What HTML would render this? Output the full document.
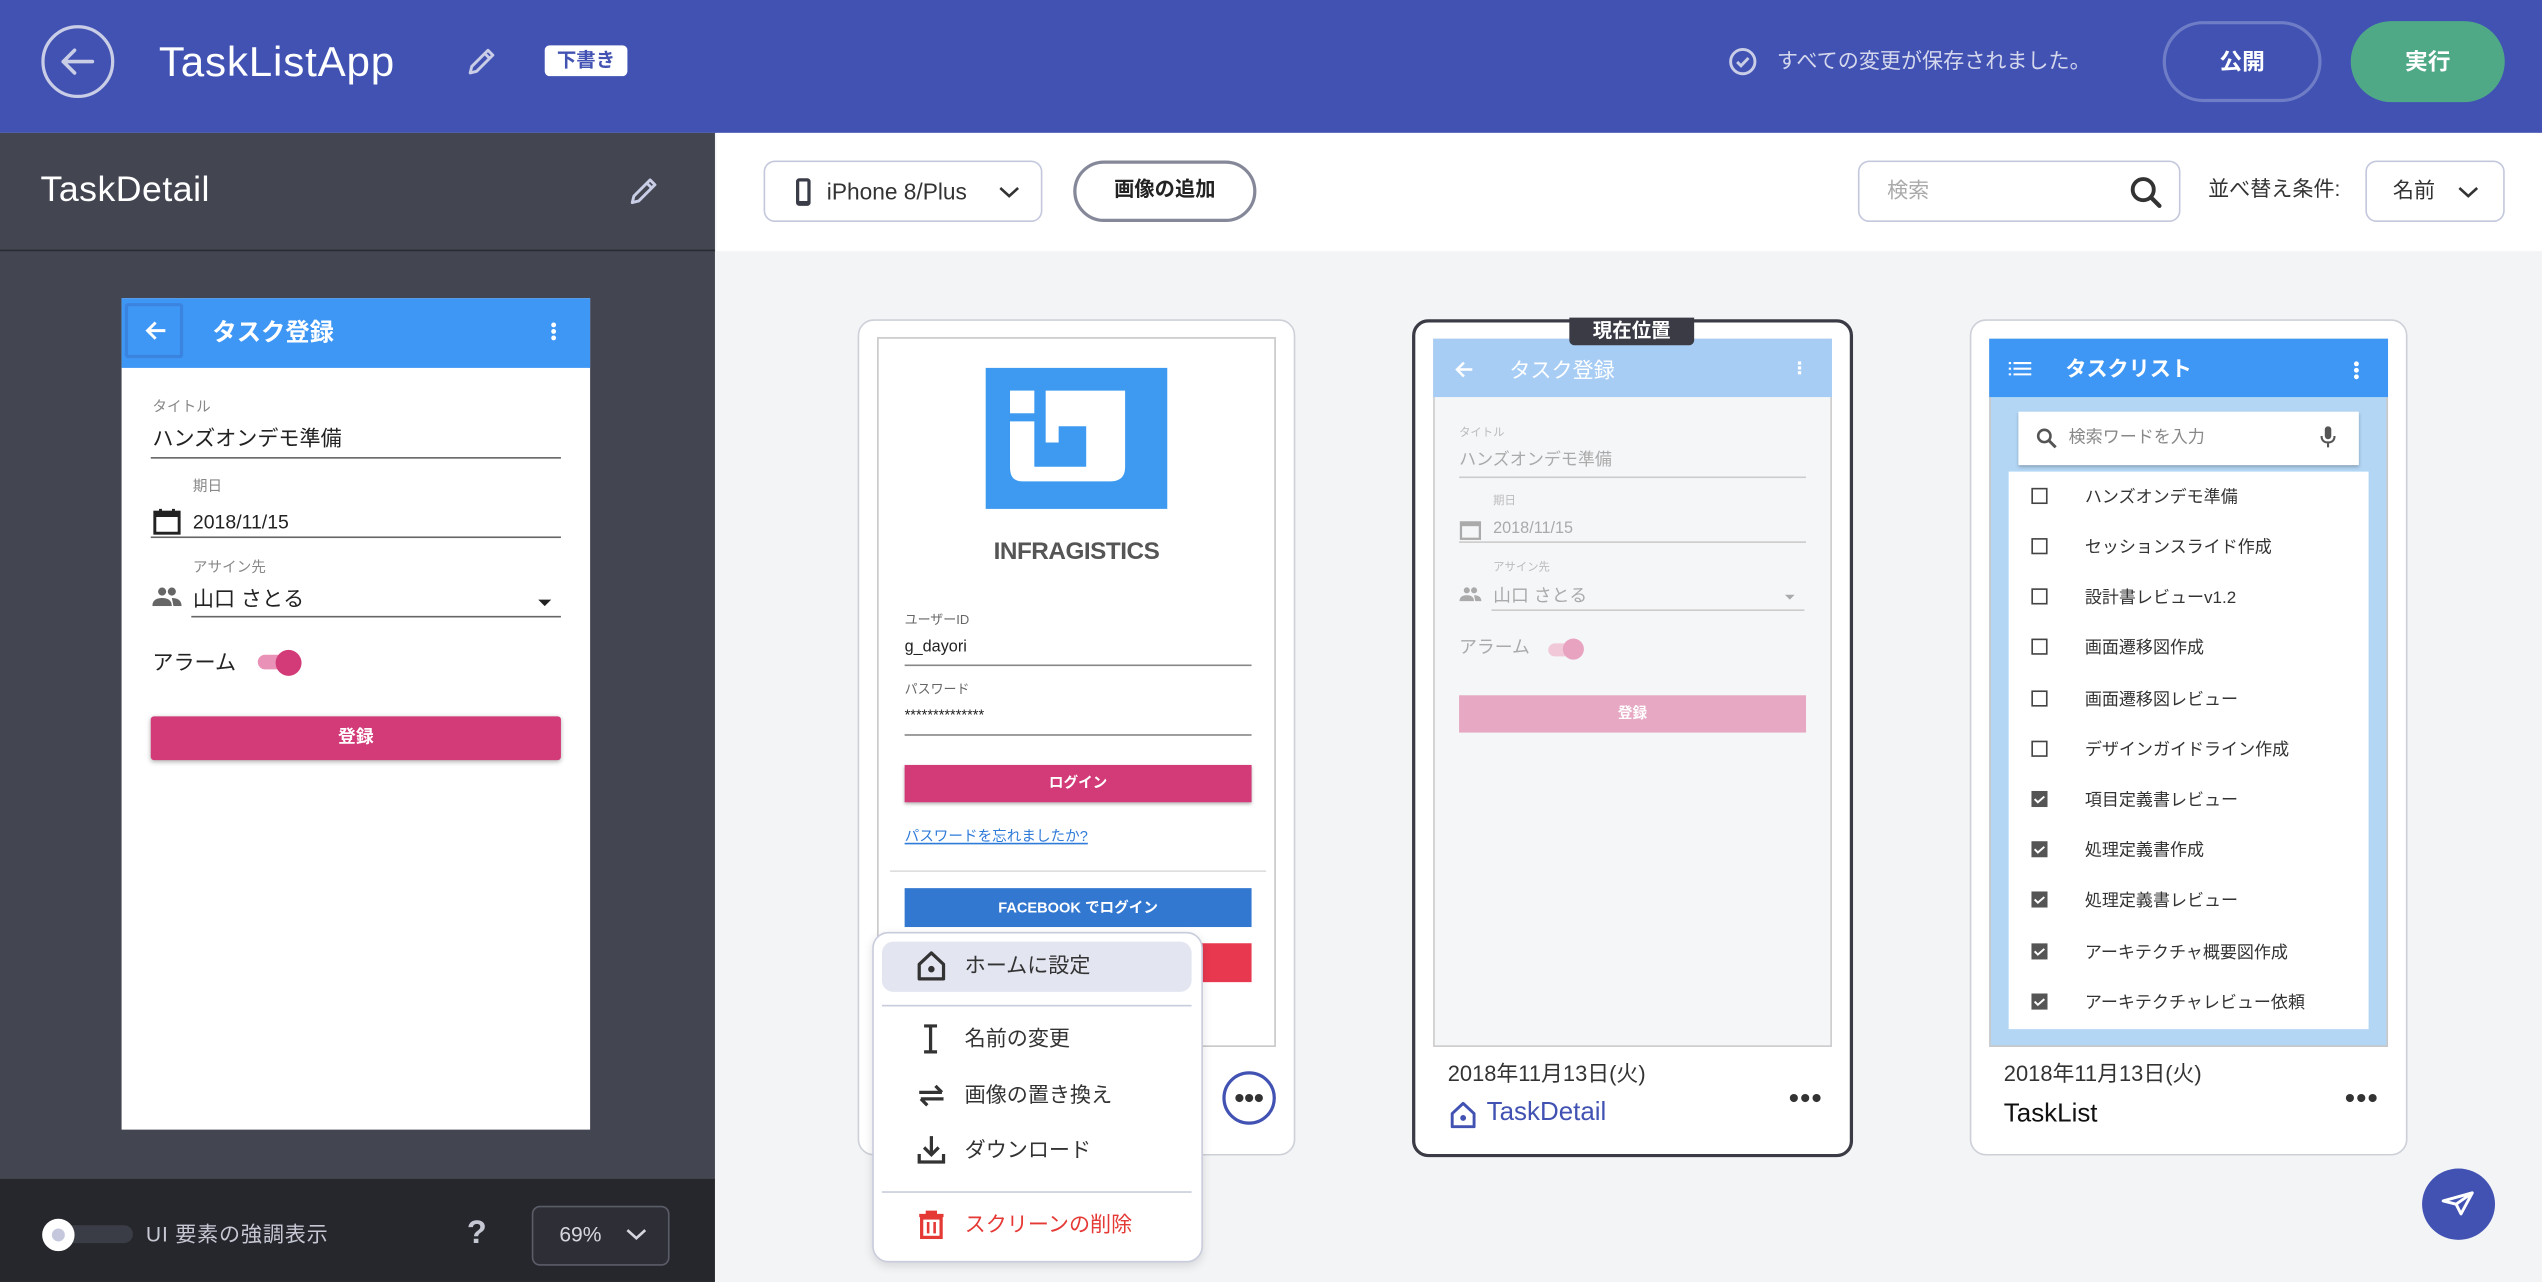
<!DOCTYPE html>
<html><head><meta charset="utf-8"><style>
*{box-sizing:border-box;margin:0;padding:0}
html,body{width:2542px;height:1282px;overflow:hidden;background:#f3f4f6}
body{font-family:"Liberation Sans","Noto Sans CJK JP",sans-serif}
#w{position:absolute;left:0;top:0;width:1568px;height:791px;transform:scale(1.6212,1.6207);transform-origin:0 0;background:#f3f4f6}
.a{position:absolute}
.t{position:absolute;white-space:nowrap;line-height:1}
</style></head><body><div id="w">
<!-- header -->
<div class="a" style="left:0;top:0;width:1568px;height:82px;background:#4152b3"></div>
<svg class="a" style="left:25px;top:15px" width="46" height="46" viewBox="0 0 46 46"><circle cx="23" cy="23" r="21.5" fill="none" stroke="#c9cde6" stroke-width="2"/><path d="M32 23H14M21 16l-7 7 7 7" fill="none" stroke="#c9cde6" stroke-width="2.2" stroke-linecap="round" stroke-linejoin="round"/></svg>
<div class="t" style="left:98px;top:25px;font-size:26px;color:#fff;letter-spacing:.5px">TaskListApp</div>
<svg class="a" style="left:287px;top:28px" width="20" height="20" viewBox="0 0 20 20"><path d="M3 17l1-4L14 3l3 3L7 16z M12 5l3 3" fill="none" stroke="#c9cde6" stroke-width="1.8" stroke-linejoin="round"/></svg>
<div class="a" style="left:336px;top:28px;width:51px;height:19px;background:#fff;border-radius:3px;color:#4152b3;font-size:12px;font-weight:bold;text-align:center;line-height:19px">下書き</div>
<svg class="a" style="left:1066px;top:29px" width="18" height="18" viewBox="0 0 18 18"><circle cx="9" cy="9" r="7.5" fill="none" stroke="#c9cde6" stroke-width="1.8"/><path d="M5.5 9.2l2.4 2.4 4.6-4.8" fill="none" stroke="#c9cde6" stroke-width="1.8"/></svg>
<div class="t" style="left:1096px;top:31px;font-size:13px;color:#d5d8ec">すべての変更が保存されました。</div>
<div class="a" style="left:1334px;top:13px;width:98px;height:50px;border:2px solid #6f7dc7;border-radius:25px;color:#fff;font-size:14px;font-weight:bold;text-align:center;line-height:46px">公開</div>
<div class="a" style="left:1450px;top:13px;width:95px;height:50px;background:#4fa987;border-radius:25px;color:#fff;font-size:14px;font-weight:bold;text-align:center;line-height:50px">実行</div>

<!-- left panel -->
<div class="a" style="left:0;top:82px;width:441px;height:645px;background:#434551"></div>
<div class="a" style="left:0;top:154px;width:441px;height:1px;background:#2a2b31"></div>
<div class="t" style="left:25px;top:106px;font-size:22px;color:#fff;letter-spacing:.3px">TaskDetail</div>
<svg class="a" style="left:387px;top:108px" width="20" height="20" viewBox="0 0 20 20"><path d="M3 17l1-4L14 3l3 3L7 16z M12 5l3 3" fill="none" stroke="#c9cde6" stroke-width="1.8" stroke-linejoin="round"/></svg>
<div class="a" style="left:75px;top:184px;width:289px;height:513px;background:#fff"></div>
<div class="a" style="left:75px;top:184px;width:289px;height:43px;background:#3f97f5"></div>
<div class="a" style="left:77px;top:187px;width:36px;height:34px;border:2px solid #3a84e0;border-radius:2px"></div>
<svg class="a" style="left:88px;top:197px" width="16" height="14" viewBox="0 0 16 14"><path d="M14 7H3M8 2L3 7l5 5" fill="none" stroke="#fff" stroke-width="1.8"/></svg>
<div class="t" style="left:131px;top:198px;font-size:15px;color:#fff;font-weight:bold">タスク登録</div>
<div class="a" style="left:340px;top:199px;width:3px;height:3px;background:#fff;border-radius:50%;box-shadow:0 4px 0 #fff,0 8px 0 #fff"></div>
<div class="t" style="left:94px;top:247px;font-size:9px;color:#888">タイトル</div>
<div class="t" style="left:94px;top:264px;font-size:13px;color:#222">ハンズオンデモ準備</div>
<div class="a" style="left:93px;top:282px;width:253px;height:1px;background:#666"></div>
<div class="t" style="left:119px;top:296px;font-size:9px;color:#888">期日</div>
<svg class="a" style="left:94px;top:313px" width="18" height="18" viewBox="0 0 18 18"><rect x="1.5" y="3" width="15" height="13" fill="none" stroke="#222" stroke-width="1.8"/><rect x="1.5" y="3" width="15" height="3" fill="#222"/><path d="M5 1v3M13 1v3" stroke="#222" stroke-width="1.8"/></svg>
<div class="t" style="left:119px;top:316px;font-size:12px;color:#222">2018/11/15</div>
<div class="a" style="left:93px;top:331px;width:253px;height:1px;background:#666"></div>
<div class="t" style="left:119px;top:346px;font-size:9px;color:#888">アサイン先</div>
<svg class="a" style="left:94px;top:362px" width="18" height="12" viewBox="0 0 18 12"><circle cx="6" cy="3" r="2.5" fill="#666"/><circle cx="12" cy="3" r="2.5" fill="#666"/><path d="M0 12c0-4 3-5 6-5s6 1 6 5zM12 7c3 0 6 1 6 5h-5z" fill="#666"/></svg>
<div class="t" style="left:119px;top:363px;font-size:13px;color:#222">山口 さとる</div>
<div class="a" style="left:332px;top:370px;border:4px solid transparent;border-top:4px solid #222"></div>
<div class="a" style="left:118px;top:380px;width:228px;height:1px;background:#666"></div>
<div class="t" style="left:94px;top:402px;font-size:13px;color:#222">アラーム</div>
<div class="a" style="left:159px;top:404px;width:24px;height:9px;background:#e991b6;border-radius:5px"></div>
<div class="a" style="left:170px;top:401px;width:16px;height:16px;background:#d23a78;border-radius:50%"></div>
<div class="a" style="left:93px;top:442px;width:253px;height:27px;background:#d23a78;border-radius:2px;box-shadow:0 1px 3px rgba(0,0,0,.3);color:#fff;font-size:11px;font-weight:bold;text-align:center;line-height:27px">登録</div>
<!-- left bottom bar -->
<div class="a" style="left:0;top:727px;width:441px;height:64px;background:#26272d"></div>
<div class="a" style="left:30px;top:756px;width:52px;height:11px;background:#3b3d46;border-radius:6px"></div>
<div class="a" style="left:26px;top:752px;width:20px;height:20px;background:#fff;border-radius:50%"></div>
<div class="a" style="left:32px;top:758px;width:8px;height:8px;background:#c5c8dc;border-radius:50%"></div>
<div class="t" style="left:90px;top:755px;font-size:13px;color:#c5c7d3;letter-spacing:.5px">UI 要素の強調表示</div>
<div class="t" style="left:288px;top:751px;font-size:20px;color:#c5c7d3;font-weight:bold">?</div>
<div class="a" style="left:328px;top:744px;width:85px;height:37px;border:1px solid #5a5c68;border-radius:5px;background:#2e2f36"></div>
<div class="t" style="left:345px;top:755px;font-size:13px;color:#d5d7e0">69%</div>
<svg class="a" style="left:386px;top:757px" width="13" height="9" viewBox="0 0 13 9"><path d="M1 2l5.5 5 5.5-5" fill="none" stroke="#d5d7e0" stroke-width="1.6"/></svg>

<!-- toolbar -->
<div class="a" style="left:442px;top:82px;width:1126px;height:73px;background:#fff"></div>
<div class="a" style="left:471px;top:99px;width:172px;height:38px;border:1px solid #c4c8dd;border-radius:7px"></div>
<div class="a" style="left:491px;top:110px;width:9px;height:17px;background:#3a3c48;border-radius:2px"></div>
<div class="a" style="left:493px;top:112px;width:5px;height:12px;background:#fff"></div>
<div class="t" style="left:510px;top:111px;font-size:14px;color:#333">iPhone 8/Plus</div>
<svg class="a" style="left:616px;top:114px" width="13" height="9" viewBox="0 0 13 9"><path d="M1 2l5.5 5 5.5-5" fill="none" stroke="#333" stroke-width="1.6"/></svg>
<div class="a" style="left:662px;top:99px;width:113px;height:38px;border:2.5px solid #858899;border-radius:19px;font-size:12.5px;font-weight:bold;color:#222;text-align:center;line-height:33px">画像の追加</div>
<div class="a" style="left:1146px;top:99px;width:199px;height:38px;border:1px solid #c4c8dd;border-radius:7px"></div>
<div class="t" style="left:1164px;top:111px;font-size:13px;color:#aaa">検索</div>
<svg class="a" style="left:1313px;top:108px" width="22" height="22" viewBox="0 0 22 22"><circle cx="9" cy="9" r="6.5" fill="none" stroke="#333" stroke-width="2.4"/><path d="M14 14l5 5" stroke="#333" stroke-width="2.6" stroke-linecap="round"/></svg>
<div class="t" style="left:1362px;top:110px;font-size:13px;color:#333">並べ替え条件:</div>
<div class="a" style="left:1459px;top:99px;width:86px;height:38px;border:1px solid #c4c8dd;border-radius:7px"></div>
<div class="t" style="left:1476px;top:111px;font-size:13px;color:#333">名前</div>
<svg class="a" style="left:1516px;top:114px" width="13" height="9" viewBox="0 0 13 9"><path d="M1 2l5.5 5 5.5-5" fill="none" stroke="#333" stroke-width="1.6"/></svg>

<!-- card 1 -->
<div class="a" style="left:529px;top:197px;width:270px;height:516px;background:#fff;border:1.5px solid #cdd0d8;border-radius:10px"></div>
<div class="a" style="left:541px;top:208px;width:246px;height:438px;background:#fff;border:1px solid #c8c8c8"></div>
<div class="a" style="left:608px;top:227px;width:112px;height:87px;background:#3d9af0"></div>
<svg class="a" style="left:608px;top:227px" width="112" height="87" viewBox="0 0 112 87"><rect x="15" y="14" width="15" height="14" fill="#fff"/><path d="M15 33h15v28h32V36H45v10H37V14h49v47c0 6-3 9-9 9H23c-6 0-8-3-8-9z" fill="#fff"/></svg>
<div class="t" style="left:608px;top:333px;width:112px;text-align:center;font-size:15px;color:#555;font-weight:bold;letter-spacing:-.3px">INFRAGISTICS</div>
<div class="t" style="left:558px;top:379px;font-size:8px;color:#666">ユーザーID</div>
<div class="t" style="left:558px;top:395px;font-size:10px;color:#222">g_dayori</div>
<div class="a" style="left:558px;top:410px;width:214px;height:1px;background:#888"></div>
<div class="t" style="left:558px;top:422px;font-size:8px;color:#666">パスワード</div>
<div class="t" style="left:558px;top:437px;font-size:9px;color:#222">**************</div>
<div class="a" style="left:558px;top:453px;width:214px;height:1px;background:#888"></div>
<div class="a" style="left:558px;top:472px;width:214px;height:23px;background:#d23a78;box-shadow:0 1px 2px rgba(0,0,0,.3);color:#fff;font-size:9px;font-weight:bold;text-align:center;line-height:23px">ログイン</div>
<div class="t" style="left:558px;top:512px;font-size:9px;color:#2f7bd8;text-decoration:underline">パスワードを忘れましたか?</div>
<div class="a" style="left:549px;top:537px;width:232px;height:1px;background:#ddd"></div>
<div class="a" style="left:558px;top:548px;width:214px;height:24px;background:#3277d0;color:#fff;font-size:9px;font-weight:bold;text-align:center;line-height:24px">FACEBOOK でログイン</div>
<div class="a" style="left:558px;top:582px;width:214px;height:24px;background:#e8384f"></div>
<div class="a" style="left:754px;top:661px;width:33px;height:33px;border:2px solid #4152b3;border-radius:50%;background:#fff"></div>
<div class="a" style="left:762px;top:675px;width:5px;height:5px;background:#333;border-radius:50%;box-shadow:6px 0 0 #333,12px 0 0 #333"></div>

<!-- menu -->
<div class="a" style="left:538px;top:575px;width:204px;height:204px;background:#fff;border:1px solid #c9ccdc;border-radius:10px;box-shadow:0 2px 6px rgba(0,0,0,.12)"></div>
<div class="a" style="left:544px;top:581px;width:191px;height:31px;background:#e3e5f1;border-radius:7px"></div>
<svg class="a" style="left:565px;top:586px" width="19" height="20" viewBox="0 0 19 20"><path d="M2 9L9.5 2 17 9v9H2z" fill="none" stroke="#333" stroke-width="2" stroke-linejoin="round"/><circle cx="9.5" cy="12" r="2" fill="#333"/></svg>
<div class="t" style="left:595px;top:589px;font-size:13px;color:#333">ホームに設定</div>
<div class="a" style="left:544px;top:620px;width:191px;height:1px;background:#c9ccdc"></div>
<svg class="a" style="left:567px;top:632px" width="14" height="18" viewBox="0 0 14 18"><path d="M3 1h8M3 17h8M7 1v16" stroke="#333" stroke-width="2"/></svg>
<div class="t" style="left:595px;top:634px;font-size:13px;color:#333">名前の変更</div>
<svg class="a" style="left:565px;top:667px" width="19" height="18" viewBox="0 0 19 18"><path d="M2 7h14M12 3l4 4M17 11H3M7 15l-4-4" fill="none" stroke="#333" stroke-width="2"/></svg>
<div class="t" style="left:595px;top:669px;font-size:13px;color:#333">画像の置き換え</div>
<svg class="a" style="left:565px;top:700px" width="19" height="19" viewBox="0 0 19 19"><path d="M9.5 1v11M5 8l4.5 4.5L14 8M2 12v5h15v-5" fill="none" stroke="#333" stroke-width="2"/></svg>
<div class="t" style="left:595px;top:703px;font-size:13px;color:#333">ダウンロード</div>
<div class="a" style="left:544px;top:735px;width:191px;height:1px;background:#c9ccdc"></div>
<svg class="a" style="left:566px;top:746px" width="17" height="19" viewBox="0 0 17 19"><path d="M1 4h15M6 4V2h5v2" fill="none" stroke="#e53935" stroke-width="2"/><rect x="2.5" y="5.5" width="12" height="12" fill="none" stroke="#e53935" stroke-width="2"/><path d="M6.5 8v7M10.5 8v7" stroke="#e53935" stroke-width="1.6"/></svg>
<div class="t" style="left:595px;top:749px;font-size:13px;color:#e53935">スクリーンの削除</div>

<!-- card 2 -->
<div class="a" style="left:871px;top:197px;width:272px;height:517px;background:#fff;border:2.5px solid #3a3b45;border-radius:10px"></div>
<div class="a" style="left:884px;top:209px;width:246px;height:437px;background:#f5f6f8;border:1px solid #ccc"></div>
<div class="a" style="left:884px;top:209px;width:246px;height:36px;background:#a8cdf5"></div>
<div class="a" style="left:968px;top:196px;width:77px;height:17px;background:#3a3b45;border-radius:0 0 3px 3px;color:#fff;font-size:12px;font-weight:bold;text-align:center;line-height:16px">現在位置</div>
<svg class="a" style="left:896px;top:222px" width="14" height="12" viewBox="0 0 16 14"><path d="M14 7H3M8 2L3 7l5 5" fill="none" stroke="#fff" stroke-width="1.8"/></svg>
<div class="t" style="left:931px;top:222px;font-size:13px;color:#fff">タスク登録</div>
<div class="a" style="left:1109px;top:223px;width:2px;height:2px;background:#fff;box-shadow:0 3px 0 #fff,0 6px 0 #fff"></div>
<div class="t" style="left:900px;top:264px;font-size:7px;color:#bbb">タイトル</div>
<div class="t" style="left:900px;top:279px;font-size:10.5px;color:#aaa">ハンズオンデモ準備</div>
<div class="a" style="left:900px;top:294px;width:214px;height:1px;background:#ccc"></div>
<div class="t" style="left:921px;top:306px;font-size:7px;color:#bbb">期日</div>
<svg class="a" style="left:900px;top:320px" width="14" height="14" viewBox="0 0 18 18"><rect x="1.5" y="3" width="15" height="13" fill="none" stroke="#aaa" stroke-width="1.8"/><rect x="1.5" y="3" width="15" height="3" fill="#aaa"/></svg>
<div class="t" style="left:921px;top:322px;font-size:10px;color:#aaa">2018/11/15</div>
<div class="a" style="left:900px;top:334px;width:214px;height:1px;background:#ccc"></div>
<div class="t" style="left:921px;top:347px;font-size:7px;color:#bbb">アサイン先</div>
<svg class="a" style="left:900px;top:362px" width="14" height="9" viewBox="0 0 18 12"><circle cx="6" cy="3" r="2.5" fill="#aaa"/><circle cx="12" cy="3" r="2.5" fill="#aaa"/><path d="M0 12c0-4 3-5 6-5s6 1 6 5zM12 7c3 0 6 1 6 5h-5z" fill="#aaa"/></svg>
<div class="t" style="left:921px;top:363px;font-size:11px;color:#aaa">山口 さとる</div>
<div class="a" style="left:1101px;top:367px;border:3.5px solid transparent;border-top:3.5px solid #aaa"></div>
<div class="a" style="left:920px;top:376px;width:193px;height:1px;background:#ccc"></div>
<div class="t" style="left:900px;top:395px;font-size:11px;color:#aaa">アラーム</div>
<div class="a" style="left:955px;top:397px;width:18px;height:8px;background:#f0c8d8;border-radius:4px"></div>
<div class="a" style="left:964px;top:394px;width:13px;height:13px;background:#e8a3c0;border-radius:50%"></div>
<div class="a" style="left:900px;top:429px;width:214px;height:23px;background:#e6a8c2;color:#fff;font-size:9px;font-weight:bold;text-align:center;line-height:23px">登録</div>
<div class="t" style="left:893px;top:656px;font-size:13.5px;color:#333">2018年11月13日(火)</div>
<svg class="a" style="left:893px;top:679px" width="19" height="18" viewBox="0 0 19 20"><path d="M2 9L9.5 2 17 9v9H2z" fill="none" stroke="#4152b3" stroke-width="2" stroke-linejoin="round"/><circle cx="9.5" cy="12" r="2" fill="#4152b3"/></svg>
<div class="t" style="left:917px;top:679px;font-size:16px;color:#4152b3">TaskDetail</div>
<div class="a" style="left:1104px;top:675px;width:5px;height:5px;background:#333;border-radius:50%;box-shadow:7px 0 0 #333,14px 0 0 #333"></div>

<!-- card 3 -->
<div class="a" style="left:1215px;top:197px;width:270px;height:516px;background:#fff;border:1.5px solid #cdd0d8;border-radius:10px"></div>
<div class="a" style="left:1227px;top:209px;width:246px;height:437px;background:#b3d6f5;border:1px solid #c8c8c8"></div>
<div class="a" style="left:1227px;top:209px;width:246px;height:36px;background:#3f97f5"></div>
<svg class="a" style="left:1239px;top:223px" width="14" height="9" viewBox="0 0 14 9"><path d="M3 1h11M3 4.5h11M3 8h11" stroke="#fff" stroke-width="1.3"/><path d="M0 1h1.5M0 4.5h1.5M0 8h1.5" stroke="#fff" stroke-width="1.3"/></svg>
<div class="t" style="left:1274px;top:221px;font-size:13px;color:#fff;font-weight:bold">タスクリスト</div>
<div class="a" style="left:1452px;top:223px;width:3px;height:3px;background:#fff;border-radius:50%;box-shadow:0 4px 0 #fff,0 8px 0 #fff"></div>
<div class="a" style="left:1245px;top:254px;width:210px;height:33px;background:#fff;box-shadow:0 1px 2px rgba(0,0,0,.25)"></div>
<svg class="a" style="left:1256px;top:264px" width="13" height="13" viewBox="0 0 13 13"><circle cx="5" cy="5" r="3.8" fill="none" stroke="#555" stroke-width="1.6"/><path d="M8 8l4 4" stroke="#555" stroke-width="1.8"/></svg>
<div class="t" style="left:1276px;top:265px;font-size:10.5px;color:#888">検索ワードを入力</div>
<svg class="a" style="left:1431px;top:263px" width="10" height="14" viewBox="0 0 10 14"><rect x="3" y="0" width="4" height="8" rx="2" fill="#555"/><path d="M1 6c0 3 2 4 4 4s4-1 4-4M5 10v3" fill="none" stroke="#555" stroke-width="1.3"/></svg>
<div class="a" style="left:1239px;top:291px;width:222px;height:344px;background:#fff"></div>
<div class="t" style="left:1236px;top:656px;font-size:13.5px;color:#333">2018年11月13日(火)</div>
<div class="t" style="left:1236px;top:680px;font-size:16px;color:#111">TaskList</div>
<div class="a" style="left:1447px;top:675px;width:5px;height:5px;background:#333;border-radius:50%;box-shadow:7px 0 0 #333,14px 0 0 #333"></div>

<!-- FAB -->
<div class="a" style="left:1494px;top:721px;width:45px;height:44px;background:#4152b3;border-radius:50%"></div>
<svg class="a" style="left:1506px;top:734px" width="20" height="17" viewBox="0 0 20 17"><path d="M1 7l18-5-7 13-3-6z M9 9l10-7" fill="none" stroke="#fff" stroke-width="1.8" stroke-linejoin="round"/></svg>

<!-- task list items -->
<div class="t" style="left:1286px;top:302px;font-size:10.5px;color:#333">ハンズオンデモ準備</div>
<div class="t" style="left:1286px;top:333px;font-size:10.5px;color:#333">セッションスライド作成</div>
<div class="t" style="left:1286px;top:364px;font-size:10.5px;color:#333">設計書レビューv1.2</div>
<div class="t" style="left:1286px;top:395px;font-size:10.5px;color:#333">画面遷移図作成</div>
<div class="t" style="left:1286px;top:427px;font-size:10.5px;color:#333">画面遷移図レビュー</div>
<div class="t" style="left:1286px;top:458px;font-size:10.5px;color:#333">デザインガイドライン作成</div>
<div class="t" style="left:1286px;top:489px;font-size:10.5px;color:#333">項目定義書レビュー</div>
<div class="t" style="left:1286px;top:520px;font-size:10.5px;color:#333">処理定義書作成</div>
<div class="t" style="left:1286px;top:551px;font-size:10.5px;color:#333">処理定義書レビュー</div>
<div class="t" style="left:1286px;top:583px;font-size:10.5px;color:#333">アーキテクチャ概要図作成</div>
<div class="t" style="left:1286px;top:614px;font-size:10.5px;color:#333">アーキテクチャレビュー依頼</div>
<div class="a" style="left:1253px;top:301px;width:10px;height:10px;border:1.5px solid #444"></div>
<div class="a" style="left:1253px;top:332px;width:10px;height:10px;border:1.5px solid #444"></div>
<div class="a" style="left:1253px;top:363px;width:10px;height:10px;border:1.5px solid #444"></div>
<div class="a" style="left:1253px;top:394px;width:10px;height:10px;border:1.5px solid #444"></div>
<div class="a" style="left:1253px;top:426px;width:10px;height:10px;border:1.5px solid #444"></div>
<div class="a" style="left:1253px;top:457px;width:10px;height:10px;border:1.5px solid #444"></div>
<svg class="a" style="left:1253px;top:488px" width="10" height="10"><rect width="10" height="10" fill="#555"/><path d="M2 5l2 2 4-3.5" fill="none" stroke="#fff" stroke-width="1.2"/></svg>
<svg class="a" style="left:1253px;top:519px" width="10" height="10"><rect width="10" height="10" fill="#555"/><path d="M2 5l2 2 4-3.5" fill="none" stroke="#fff" stroke-width="1.2"/></svg>
<svg class="a" style="left:1253px;top:550px" width="10" height="10"><rect width="10" height="10" fill="#555"/><path d="M2 5l2 2 4-3.5" fill="none" stroke="#fff" stroke-width="1.2"/></svg>
<svg class="a" style="left:1253px;top:582px" width="10" height="10"><rect width="10" height="10" fill="#555"/><path d="M2 5l2 2 4-3.5" fill="none" stroke="#fff" stroke-width="1.2"/></svg>
<svg class="a" style="left:1253px;top:613px" width="10" height="10"><rect width="10" height="10" fill="#555"/><path d="M2 5l2 2 4-3.5" fill="none" stroke="#fff" stroke-width="1.2"/></svg>
</div></body></html>
